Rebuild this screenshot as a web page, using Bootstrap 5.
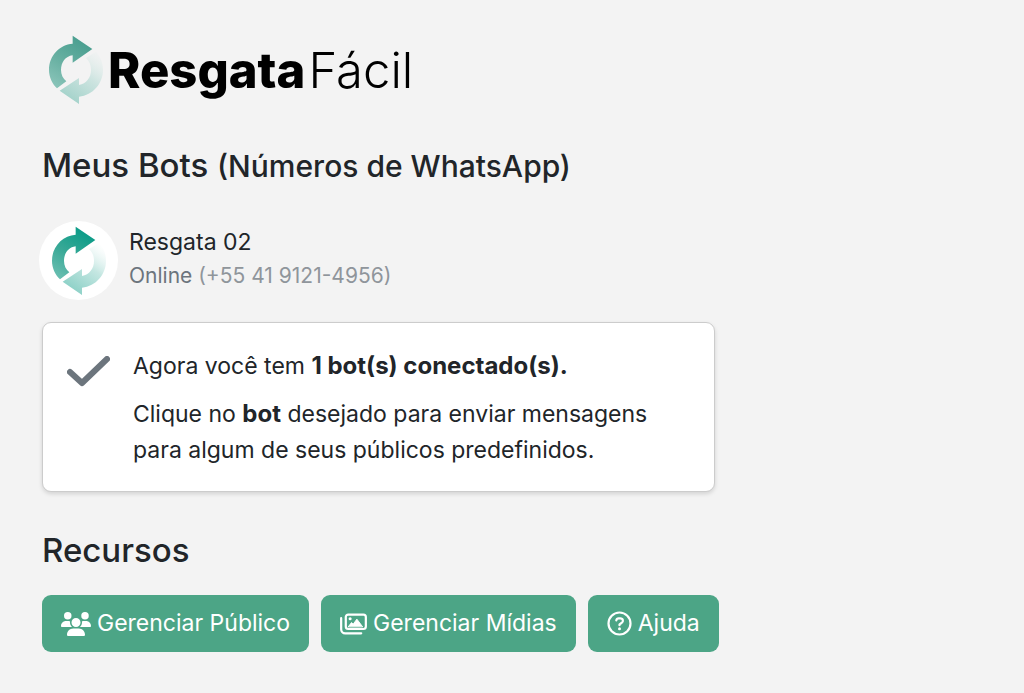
<!DOCTYPE html>
<html lang="pt-BR">
<head>
<meta charset="utf-8">
<meta name="viewport" content="width=device-width, initial-scale=1">
<title>ResgataFácil</title>
<link href="https://cdn.jsdelivr.net/npm/bootstrap@5.3.0/dist/css/bootstrap.min.css" rel="stylesheet">
<style>
  body { background: #f3f3f3; font-family: Inter, "Liberation Sans", sans-serif; font-size: 23px; line-height: 36px; color: #212529; }
  .page { padding: 34px 42px; }
  .brand { height: 72px; margin-bottom: 38px; margin-left: 5px; color: #000; font-size: 49px; line-height: 72px; gap: 3px; }
  .brand div { padding-top: 2px; }
  .brand strong { font-weight: 800; }
  .brand .thin { font-weight: 300; margin-left: 3px; }
  h1, h2 { font-size: 33px; font-weight: 500; line-height: 42px; margin: 0; }
  h1 small { font-size: 30px; font-weight: 500; }
  .bot { margin: 34px 0 22px -3px; gap: 11px; color: inherit; }
  .avatar { width: 79px; height: 79px; background: #fff; }
  .bot-text { padding-bottom: 4px; line-height: 33px; }
  .bot-state { font-size: 21px; color: #6c757d; }
  .bot-state .phone { color: #8f959b; }
  .notice { max-width: 673px; border: 1px solid #ccc; border-radius: 9px; padding: 25px 24px 23px; gap: 23px; box-shadow: 0 2px 4px #0002; margin-bottom: 37px; }
  .notice p { margin-bottom: 12px; }
  .notice strong { font-size: 24px; }
  .notice svg { margin-top: 8px; }
  .tools { margin-top: 24px; gap: 12px; }
  .btn-tool { --bs-btn-color: #fff; --bs-btn-bg: #4ca586; --bs-btn-hover-color: #fff; --bs-btn-hover-bg: #3f9175; --bs-btn-border-radius: 9px; --bs-btn-font-size: 23px; --bs-btn-line-height: 37px; --bs-btn-padding-x: 18px; --bs-btn-padding-y: 9px; gap: 6px; }
</style>
</head>
<body>
<svg class="position-absolute" width="0" height="0" aria-hidden="true">
  <defs>
    <linearGradient id="deep" gradientUnits="userSpaceOnUse" x1="170" y1="70" x2="80" y2="210">
      <stop offset="0" stop-color="#0c9c88"/><stop offset=".5" stop-color="#3aa997"/><stop offset="1" stop-color="#6fc1b4"/>
    </linearGradient>
    <linearGradient id="pale" gradientUnits="userSpaceOnUse" x1="120" y1="240" x2="215" y2="105">
      <stop offset="0" stop-color="#8bd0c6"/><stop offset=".55" stop-color="#c5e7e2"/><stop offset="1" stop-color="#e4f3f1" stop-opacity="0"/>
    </linearGradient>
    <linearGradient id="deep-muted" gradientUnits="userSpaceOnUse" x1="170" y1="70" x2="80" y2="210">
      <stop offset="0" stop-color="#4a9f90"/><stop offset=".5" stop-color="#68b0a2"/><stop offset="1" stop-color="#8dc6bb"/>
    </linearGradient>
    <linearGradient id="pale-muted" gradientUnits="userSpaceOnUse" x1="120" y1="240" x2="215" y2="105">
      <stop offset="0" stop-color="#a3d2ca"/><stop offset=".55" stop-color="#cde4e0"/><stop offset="1" stop-color="#e4eeec" stop-opacity=".2"/>
    </linearGradient>
    <path id="arrow-top" d="M137 50 196 90 137 131V109C115 112 102 130 102 153C102 167 108 179 118 187L90 208C75 193 66 174 66 152C66 110 97 77 137 74Z"/>
    <path id="arrow-bottom" d="M98 215 156 177V198C178 194 192 176 192 153C192 138 187 126 177 117L207 98C221 113 228 132 228 153C228 193 198 229 156 233V255Z"/>
  </defs>
</svg>
<main class="page">
  <header class="brand d-flex align-items-center">
    <svg width="58" height="72" viewBox="60 45 174 216" aria-hidden="true"><use href="#arrow-top" fill="url(#deep-muted)"/><use href="#arrow-bottom" fill="url(#pale-muted)"/></svg>
    <div><strong>Resgata</strong><span class="thin">Fácil</span></div>
  </header>

  <h1>Meus Bots <small>(Números de WhatsApp)</small></h1>

  <a href="#" class="bot d-flex align-items-center text-decoration-none">
    <span class="avatar rounded-circle d-flex align-items-center justify-content-center flex-shrink-0">
      <svg width="58" height="72" viewBox="60 45 174 216" aria-hidden="true"><use href="#arrow-top" fill="url(#deep)"/><use href="#arrow-bottom" fill="url(#pale)"/></svg>
    </span>
    <span class="bot-text">
      <span class="d-block">Resgata 02</span>
      <span class="bot-state d-block">Online <span class="phone">(+55 41 9121-4956)</span></span>
    </span>
  </a>

  <section class="notice bg-white d-flex align-items-start">
    <svg class="flex-shrink-0" width="43" height="31" viewBox="0 0 43 31" fill="none" stroke="#6c757d" stroke-width="6" stroke-linecap="round" stroke-linejoin="round" aria-hidden="true"><path d="M3 16 15 27 40 3"/></svg>
    <div>
      <p>Agora você tem <strong>1 bot(s) conectado(s).</strong></p>
      <p class="mb-0">Clique no <strong>bot</strong> desejado para enviar mensagens para algum de seus públicos predefinidos.</p>
    </div>
  </section>

  <h2>Recursos</h2>
  <div class="tools d-flex flex-wrap">
    <button type="button" class="btn btn-tool d-flex align-items-center">
      <svg width="30" height="24" viewBox="0 0 640 512" fill="currentColor" aria-hidden="true"><path d="M144 0a80 80 0 1 1 0 160A80 80 0 1 1 144 0zM512 0a80 80 0 1 1 0 160A80 80 0 1 1 512 0zM0 298.700C0 239.800 47.800 192 106.700 192h42.700c15.900 0 31 3.500 44.600 9.700-1.300 7.200-1.900 14.700-1.900 22.300 0 38.200 16.800 72.500 43.300 96H21.300C9.600 320 0 310.400 0 298.700zM405.300 320h-.7c26.600-23.500 43.300-57.800 43.300-96 0-7.600-.7-15-1.900-22.300 13.600-6.300 28.700-9.700 44.600-9.700h42.700C592.200 192 640 239.800 640 298.700c0 11.800-9.600 21.300-21.300 21.300zM224 224a96 96 0 1 1 192 0 96 96 0 1 1-192 0zM128 485.300C128 411.700 187.700 352 261.300 352h117.400C452.300 352 512 411.700 512 485.300c0 14.700-11.900 26.700-26.700 26.700H154.700c-14.700 0-26.700-11.900-26.700-26.700z"/></svg>
      Gerenciar Público
    </button>
    <button type="button" class="btn btn-tool d-flex align-items-center">
      <svg width="27" height="22" viewBox="0 0 28 22" fill="none" stroke="currentColor" stroke-width="2.300" stroke-linecap="round" aria-hidden="true"><rect x="6" y="1.200" width="20.800" height="15" rx="2.500"/><path d="M1.200 5V16.500A4.200 4.200 0 0 0 5.400 20.700H22"/><circle cx="10.500" cy="5.500" r="1.600" fill="currentColor" stroke="none"/><path d="M8.700 13.700 12 9.500 13.600 11.300 17.500 6 23.300 13.700Z" fill="currentColor" stroke-width="1" stroke-linejoin="round"/></svg>
      Gerenciar Mídias
    </button>
    <button type="button" class="btn btn-tool d-flex align-items-center">
      <svg width="25" height="25" viewBox="0 0 25 25" fill="none" stroke="currentColor" stroke-width="2.200" stroke-linecap="round" stroke-linejoin="round" aria-hidden="true"><circle cx="12.500" cy="12.500" r="11"/><path d="M9.300 9.300C9.500 7.900 10.500 7.300 11.700 7.300H13.300C16.300 7.300 16.800 10.700 14.500 12L12.500 13.300V14.200"/><circle cx="12.500" cy="17.700" r="1.500" fill="currentColor" stroke="none"/></svg>
      Ajuda
    </button>
  </div>
</main>
<script src="https://cdn.jsdelivr.net/npm/bootstrap@5.3.0/dist/js/bootstrap.bundle.min.js"></script>
</body>
</html>
